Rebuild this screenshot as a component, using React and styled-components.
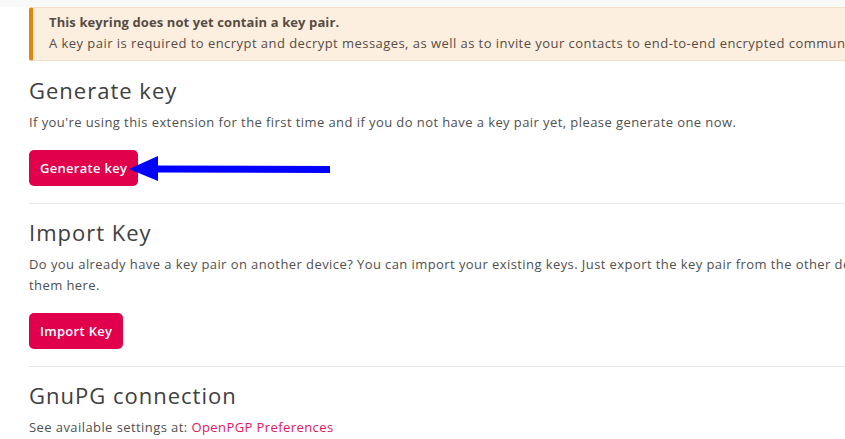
import React from 'react'
import styled, { createGlobalStyle } from 'styled-components'

const GlobalStyle = createGlobalStyle`
    html, body {
        margin: 0;
        padding: 0;
        background: #ffffff;
        overflow: hidden;
    }
    body {
        font-family: "Open Sans", "Liberation Sans", sans-serif;
        color: #4f4f4f;
    }
`

const TopStrip = styled.div`
    height: 7px;
    background: #f9f9f9;
`

const Page = styled.div`
    width: 940px;
    padding: 0 0 0 29px;
`

const Alert = styled.div`
    background: #fcefdf;
    border: 1px solid #f6e0c4;
    border-left: 4px solid #e5830b;
    border-radius: 3px;
    padding: 4px 16px 6px 16px;
    font-size: 13px;
    line-height: 21px;
    letter-spacing: 0.45px;
    color: #574c44;
    white-space: nowrap;
`

const AlertTitle = styled.div`
    font-weight: 700;
    letter-spacing: 0.1px;
`

const Section = styled.section`
    display: flex;
    flex-direction: column;
    align-items: flex-start;
    padding: ${props => props.first ? '15px' : '14px'} 0 17px;
    border-bottom: ${props => props.last ? 'none' : '1px solid #e6e6e6'};
`

const Heading = styled.h2`
    margin: 0;
    font-size: 22px;
    line-height: 28px;
    font-weight: 400;
    letter-spacing: 1px;
    color: #404040;
`

const Text = styled.p`
    margin: 8px 0 0;
    font-size: 13px;
    line-height: 21px;
    letter-spacing: 0.42px;
    color: #505050;
`

const ButtonRow = styled.div`
    position: relative;
    margin-top: 17px;
`

const Button = styled.button`
    height: 36px;
    padding: 0 11px;
    border: none;
    border-radius: 5px;
    background: #e0004b;
    color: #ffffff;
    font-family: inherit;
    font-size: 13px;
    font-weight: 600;
    letter-spacing: 0.3px;
    cursor: pointer;
`

const Link = styled.a`
    color: #e3185a;
    text-decoration: none;
`

const Arrow = styled.svg`
    position: absolute;
    left: 100px;
    top: 4px;
    overflow: visible;
`

function PointerArrow() {
    return (
        <Arrow width="202" height="26" viewBox="0 0 202 26">
            <line x1="26" y1="15" x2="201" y2="15.5" stroke="#0000ff" strokeWidth="7" />
            <polygon points="0,15 29,2 29,27" fill="#0000ff" />
        </Arrow>
    )
}

export default function App() {
    return (
        <>
            <GlobalStyle />
            <TopStrip />
            <Page>
                <Alert>
                    <AlertTitle>This keyring does not yet contain a key pair.</AlertTitle>
                    <div>A key pair is required to encrypt and decrypt messages, as well as to invite your contacts to end-to-end encrypted communication.</div>
                </Alert>
                <Section first>
                    <Heading>Generate key</Heading>
                    <Text>If you're using this extension for the first time and if you do not have a key pair yet, please generate one now.</Text>
                    <ButtonRow>
                        <Button>Generate key</Button>
                        <PointerArrow />
                    </ButtonRow>
                </Section>
                <Section>
                    <Heading>Import Key</Heading>
                    <Text>Do you already have a key pair on another device? You can import your existing keys. Just export the key pair from the other device and import them here.</Text>
                    <ButtonRow>
                        <Button>Import Key</Button>
                    </ButtonRow>
                </Section>
                <Section last>
                    <Heading>GnuPG connection</Heading>
                    <Text>See available settings at: <Link href="#">OpenPGP Preferences</Link></Text>
                </Section>
            </Page>
        </>
    )
}
